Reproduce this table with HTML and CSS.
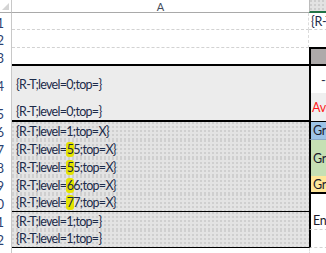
FILE: index.html
```html
<!DOCTYPE html>
<html>
<head>
<meta charset="utf-8">
<link rel="stylesheet" href="styles.css">
</head>
<body>
<div class="sheet">
  <div class="corner"><span class="tri"></span></div>
  <div class="colhead">A</div>
  <div class="colhead sel"></div>

  <div class="rh r1">1</div>
  <div class="a r1 grid">&nbsp;</div>
  <div class="b r1 grid"><span class="txt">{R-T;level=0;top=}</span></div>

  <div class="rh r2">2</div>
  <div class="a r2 grid"></div>
  <div class="b r2 grid"></div>

  <div class="rh r3">3</div>
  <div class="a r3 thick"></div>
  <div class="b r3 gray box"></div>

  <div class="rh r4">4</div>
  <div class="a r4 light"><span class="txt">{R-T;level=0;top=}</span></div>
  <div class="b r45 edge">
    <div class="dash">--</div>
    <div class="ave">Ave</div>
  </div>

  <div class="rh r5">5</div>
  <div class="a r5 light thick"><span class="txt">{R-T;level=0;top=}</span></div>

  <div class="rh r6">6</div>
  <div class="a r6 dots"><span class="txt">{R-T;level=1;top=X}</span></div>
  <div class="b r6 edge blue"><span class="txt">Gre</span></div>

  <div class="rh r7">7</div>
  <div class="a r7 dots"><span class="txt">{R-T;level=<mark class="hl">5</mark>5;top=X}</span></div>
  <div class="b r78 edge green"><span class="txt">Gre</span></div>

  <div class="rh r8">8</div>
  <div class="a r8 dots"><span class="txt">{R-T;level=<mark class="hl">5</mark>5;top=X}</span></div>

  <div class="rh r9">9</div>
  <div class="a r9 dots"><span class="txt">{R-T;level=<mark class="hl">6</mark>6;top=X}</span></div>
  <div class="b r9 edge amber"><span class="txt">Gre</span></div>

  <div class="rh r10">10</div>
  <div class="a r10 dots line"><span class="txt">{R-T;level=<mark class="hl">7</mark>7;top=X}</span></div>
  <div class="b r10 edge"></div>

  <div class="rh r11">11</div>
  <div class="a r11 dots"><span class="txt">{R-T;level=1;top=}</span></div>
  <div class="b r11 edge grid"><span class="txt ene">Ene</span></div>

  <div class="rh r12">12</div>
  <div class="a r12 dots line"><span class="txt">{R-T;level=1;top=}</span></div>
  <div class="b r12 edge grid"></div>

  <div class="rh rest"></div>
  <div class="a rest"></div>
  <div class="b rest"></div>
</div>
</body>
</html>
```

FILE: styles.css
```css
* { box-sizing: border-box; margin: 0; padding: 0; }
html, body { width: 326px; height: 253px; overflow: hidden; background: #fff; }
body { font-family: Lato, "Liberation Sans", sans-serif; font-size: 12.5px; letter-spacing: -0.7px; word-spacing: 0; color: #1c2b4a; }

.sheet {
  display: grid;
  grid-template-columns: 12px 297px 40px;
  grid-template-rows: 13px 17px 18px 18px 37px 19px 18px 18px 18px 18px 18px 18px 18px 10px;
  width: 349px;
}

.corner { border-right: 1px solid #c8c8c8; border-bottom: 1px solid #a9a9a9; position: relative; }
.tri {
  position: absolute; right: 2px; bottom: 2px; width: 0; height: 0;
  border-left: 7px solid transparent; border-bottom: 7px solid #d4d4d4;
}
.colhead {
  border-bottom: 1px solid #a9a9a9;
  font-size: 11px; letter-spacing: 0; color: #444c5a;
  display: flex; justify-content: center; align-items: center;
  line-height: 1;
}
.colhead.sel {
  border-bottom: 2px solid #217346;
  background: radial-gradient(circle at 1px 1px, #cdcdcd 0.7px, transparent 1px) 0 0 / 4px 4px, #e2e2e2;
  border-left: 1px solid #bcbcbc;
}

.rh {
  grid-column: 1;
  border-right: 1px solid #c8c8c8;
  display: flex; justify-content: flex-end; align-items: center;
  padding: 2px 7px 0 0; overflow: hidden; white-space: nowrap;
  color: #2c4270; font-size: 13px; letter-spacing: 0;
}
.a { grid-column: 2; display: flex; align-items: center; padding-left: 4px; white-space: nowrap; overflow: hidden; }
.b { grid-column: 3; display: flex; align-items: center; padding-left: 2px; white-space: nowrap; overflow: hidden; letter-spacing: -0.3px; }

.r1 { grid-row: 2; } .r2 { grid-row: 3; } .r3 { grid-row: 4; } .r4 { grid-row: 5; }
.r5 { grid-row: 6; } .r6 { grid-row: 7; } .r7 { grid-row: 8; } .r8 { grid-row: 9; }
.r9 { grid-row: 10; } .r10 { grid-row: 11; } .r11 { grid-row: 12; } .r12 { grid-row: 13; }
.rest { grid-row: 14; }
.r45 { grid-row: 5 / 7; }
.r78 { grid-row: 8 / 10; }

.grid { border-bottom: 1px dashed #d2d2d2; }
.a.grid { border-right: 1px dashed #dcdcdc; }
.thick { border-bottom: 2px solid #000; }
.line { border-bottom: 1px solid #000; }
.light { background: #ececec; }
.dots {
  background: radial-gradient(circle at 1px 1px, #cfcfcf 0.7px, transparent 1px) 0 0 / 4px 4px, #e3e3e3;
}

.box { border-top: 2px solid #000; border-left: 2px solid #000; border-bottom: 2px solid #000; margin-top: -1px; }
.gray { background: #aeaaaa; }
.edge { border-left: 2px solid #000; }

.r45 { flex-direction: column; align-items: stretch; padding-left: 0; border-bottom: 1px solid #000; }
.dash { height: 27px; background: #fff; padding: 8px 0 0 10px; line-height: 13px; }
.ave { flex: 1; background: #efefef; color: #ff1a1a; display: flex; align-items: center; padding-left: 1px; }

.blue { background: #9dc3e6; border-bottom: 1px solid #8aa9c6; }
.green { background: #c6e0b4; }
.amber { background: #ffe699; border-bottom: 2px solid #000; }
.ene { color: #3a1a40; }
.b .txt { color: #1a1a2a; }
.b.r1 .txt { color: #1c2b4a; }

.hl {
  background: #e4e400; color: inherit;
  display: inline-block; width: 8px; height: 15px; line-height: 15px;
  border-radius: 3px; margin-right: -1px; letter-spacing: 0; text-indent: 0.5px;
}
.rest.b { border-left: 1px dashed #dcdcdc; }
```
